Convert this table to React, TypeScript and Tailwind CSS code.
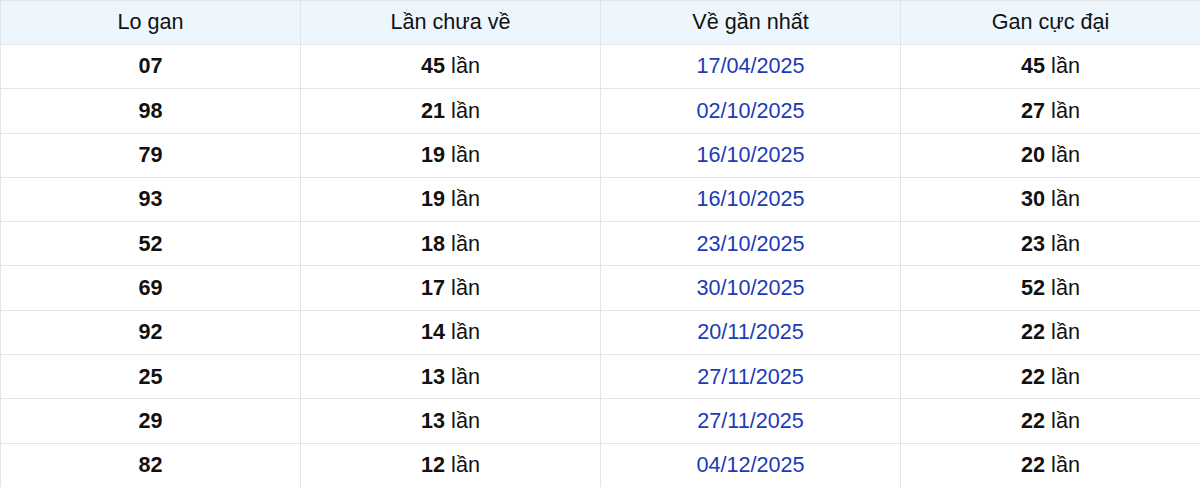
const rows = [
  { lo: '07', chua: 45, date: '17/04/2025', max: 45 },
  { lo: '98', chua: 21, date: '02/10/2025', max: 27 },
  { lo: '79', chua: 19, date: '16/10/2025', max: 20 },
  { lo: '93', chua: 19, date: '16/10/2025', max: 30 },
  { lo: '52', chua: 18, date: '23/10/2025', max: 23 },
  { lo: '69', chua: 17, date: '30/10/2025', max: 52 },
  { lo: '92', chua: 14, date: '20/11/2025', max: 22 },
  { lo: '25', chua: 13, date: '27/11/2025', max: 22 },
  { lo: '29', chua: 13, date: '27/11/2025', max: 22 },
  { lo: '82', chua: 12, date: '04/12/2025', max: 22 },
];

const headers = ['Lo gan', 'Lần chưa về', 'Về gần nhất', 'Gan cực đại'];

export default function App() {
  return (
    <div className="w-[1200px] h-[487px] overflow-hidden bg-white font-['Liberation_Sans',Arial,sans-serif] text-[21.6px] text-[#111]">
      <table className="w-[1201px] border-collapse table-fixed">
        <thead>
          <tr className="h-[44px] bg-[#eef6fd]">
            {headers.map((h) => (
              <th key={h} className="border border-[#e3e5e9] font-normal text-center p-0">
                {h}
              </th>
            ))}
          </tr>
        </thead>
        <tbody>
          {rows.map((r, idx) => (
            <tr key={idx} className="h-[44.3px]">
              <td className="border border-[#e3e5e9] text-center font-bold p-0">{r.lo}</td>
              <td className="border border-[#e3e5e9] text-center p-0">
                <span className="font-bold">{r.chua}</span> lần
              </td>
              <td className="border border-[#e3e5e9] text-center text-[#1b3bb8] p-0">{r.date}</td>
              <td className="border border-[#e3e5e9] text-center p-0">
                <span className="font-bold">{r.max}</span> lần
              </td>
            </tr>
          ))}
        </tbody>
      </table>
    </div>
  );
}
